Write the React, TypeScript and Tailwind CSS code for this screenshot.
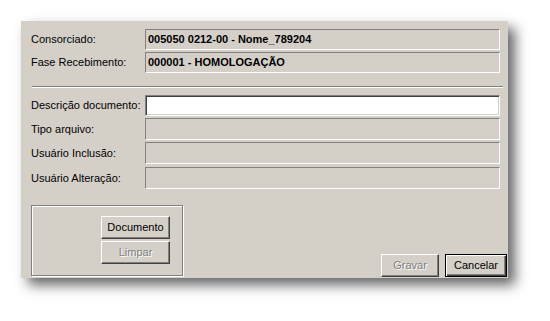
import React from 'react';

const FONT = { fontFamily: '"Liberation Sans", Arial, sans-serif' };

function Field({ value, white, className = '' }: { value?: string; white?: boolean; className?: string }) {
  const base = white
    ? 'bg-white border border-t-[#808080] border-l-[#808080] border-r-white border-b-white shadow-[inset_1px_1px_0_#404040,inset_-1px_-1px_0_#d4d0c8]'
    : 'bg-[#d4d0c8] border border-t-[#808080] border-l-[#808080] border-r-white border-b-white';
  return (
    <div className={`flex-1 flex items-center pl-[2px] text-[11px] font-bold text-black ${base} ${className}`}>
      {value}
    </div>
  );
}

function Row({ label, children, className = '' }: { label: string; children: React.ReactNode; className?: string }) {
  return (
    <div className={`flex items-stretch ${className}`}>
      <div className="w-[114px] flex items-center text-[11px] text-black">{label}</div>
      {children}
    </div>
  );
}

function Button({ label, disabled, isDefault, className = '' }: { label: string; disabled?: boolean; isDefault?: boolean; className?: string }) {
  const frame = isDefault
    ? 'border border-black shadow-[inset_1px_1px_0_#fff,inset_-1px_-1px_0_#404040,inset_-2px_-2px_0_#808080]'
    : 'border border-t-white border-l-white border-r-[#404040] border-b-[#404040] shadow-[inset_-1px_-1px_0_#808080]';
  return (
    <div
      className={`flex items-center justify-center bg-[#d4d0c8] text-[11px] ${frame} ${
        disabled ? 'text-[#808080] [text-shadow:1px_1px_0_#fff]' : 'text-black'
      } ${className}`}
    >
      {label}
    </div>
  );
}

export default function App() {
  return (
    <div className="w-[550px] h-[321px] bg-white pt-[21px] pl-[21px]" style={FONT}>
      <div className="w-[487px] h-[257px] bg-[#d4d0c8] shadow-[7px_7px_12px_rgba(0,0,0,0.6)] flex flex-col pt-[8px] pl-[10px] pr-[8px]">
        <Row label="Consorciado:" className="h-[21px]">
          <Field value="005050 0212-00 - Nome_789204" />
        </Row>
        <Row label="Fase Recebimento:" className="h-[21px] mt-[2px]">
          <Field value="000001 - HOMOLOGAÇÃO" />
        </Row>

        {/* etched separator */}
        <div className="mt-[13px] ml-[1px] mr-[-3px] h-[2px] border-t border-t-[#808080] border-b border-b-white" />

        <Row label="Descrição documento:" className="h-[21px] mt-[7px]">
          <Field white />
        </Row>
        <Row label="Tipo arquivo:" className="h-[22px] mt-[2px]">
          <Field />
        </Row>
        <Row label="Usuário Inclusão:" className="h-[22px] mt-[2px]">
          <Field />
        </Row>
        <Row label="Usuário Alteração:" className="h-[22px] mt-[3px]">
          <Field />
        </Row>

        <div className="flex items-end justify-between mt-[16px] mr-[-7px]">
          <div className="w-[152px] h-[71px] border border-[#808080] shadow-[inset_1px_1px_0_#fff,1px_1px_0_#fff] flex flex-col items-start pt-[10px] pl-[69px]">
            <Button label="Documento" className="w-[69px] h-[23px]" />
            <Button label="Limpar" disabled className="w-[69px] h-[23px] mt-[2px]" />
          </div>
          <div className="flex gap-[6px] mb-[-1px]">
            <Button label="Gravar" disabled className="w-[58px] h-[23px]" />
            <Button label="Cancelar" isDefault className="w-[62px] h-[23px]" />
          </div>
        </div>
      </div>
    </div>
  );
}
